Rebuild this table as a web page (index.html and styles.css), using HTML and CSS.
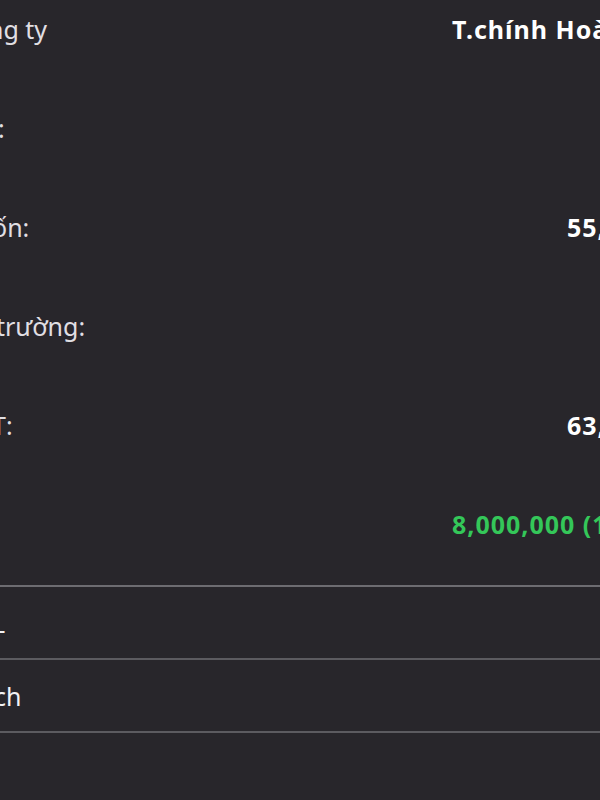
FILE: index.html
```html
<!DOCTYPE html>
<html lang="vi">
<head>
<meta charset="utf-8">
<title>Thông tin</title>
<link rel="stylesheet" href="styles.css">
</head>
<body>
<main class="sheet">
  <section class="info">
    <div class="row"><span class="label cut-1">ng ty</span><span class="value">T.chính Hoàn thiện</span></div>
    <div class="row"><span class="label cut-2">:</span><span class="value"></span></div>
    <div class="row"><span class="label cut-3">ốn:</span><span class="value num">55,000,000</span></div>
    <div class="row"><span class="label cut-4">trường:</span><span class="value"></span></div>
    <div class="row"><span class="label cut-5">T:</span><span class="value num">63,000,000</span></div>
    <div class="row"><span class="label"></span><span class="value gain">8,000,000 (14.5%)</span></div>
  </section>
  <ul class="menu">
    <li class="menu-item"><span class="cut-l">L</span></li>
    <li class="menu-item"><span class="cut-ch">ch</span></li>
  </ul>
</main>
</body>
</html>
```

FILE: styles.css
```css
html, body {
  margin: 0;
  padding: 0;
  background: #28262b;
}
body {
  width: 600px;
  height: 800px;
  overflow: hidden;
  font-family: "Noto Sans", "Open Sans", sans-serif;
  font-size: 25px;
  color: #e0dfe3;
}
.sheet {
  width: 600px;
}
.info {
  margin-top: -21px;
  padding-bottom: 12px;
  border-bottom: 2px solid #6d6c71;
}
.row {
  display: grid;
  grid-template-columns: 452px 1fr;
  align-items: center;
  height: 99px;
  white-space: nowrap;
}
.value {
  font-weight: 700;
  color: #ffffff;
  letter-spacing: 1px;
}
.value.num {
  margin-left: 115px;
}
.value.gain {
  color: #34c759;
}
.cut-1 { margin-left: -12px; }
.cut-2 { margin-left: -2px; }
.cut-3 { margin-left: -8px; }
.cut-4 { margin-left: -4px; }
.cut-5 { margin-left: -8px; }
.menu {
  list-style: none;
  margin: 0;
  padding: 0;
}
.menu-item {
  display: flex;
  align-items: center;
  height: 71px;
  border-bottom: 2px solid #5c5b60;
  color: #f2f2f4;
  white-space: nowrap;
}
.cut-l { margin-left: -8px; }
.cut-ch { margin-left: -6px; }
```
